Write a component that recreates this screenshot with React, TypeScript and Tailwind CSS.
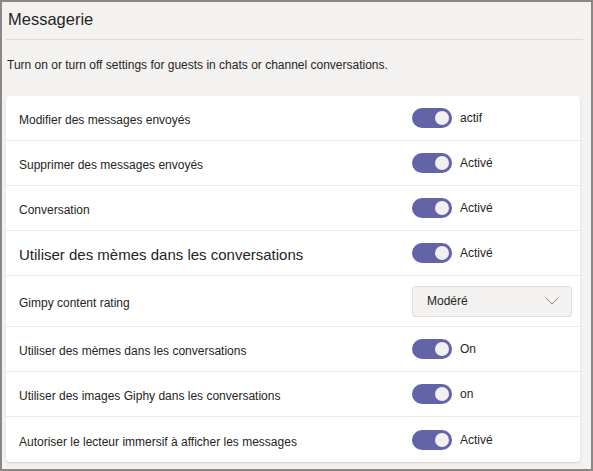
const rows: { label: string; value?: string; big?: boolean; select?: boolean }[] = [
  { label: "Modifier des messages envoyés", value: "actif" },
  { label: "Supprimer des messages envoyés", value: "Activé" },
  { label: "Conversation", value: "Activé" },
  { label: "Utiliser des mèmes dans les conversations", value: "Activé", big: true },
  { label: "Gimpy content rating", select: true },
  { label: "Utiliser des mèmes dans les conversations", value: "On" },
  { label: "Utiliser des images Giphy dans les conversations", value: "on" },
  { label: "Autoriser le lecteur immersif à afficher les messages", value: "Activé" },
];

function Toggle() {
  return (
    <div className="flex h-[20px] w-[40px] items-center justify-end rounded-full bg-[#6264a7] pr-[3px]">
      <div className="h-[14px] w-[14px] rounded-full bg-[#f0f0f0]" />
    </div>
  );
}

export default function App() {
  return (
    <div
      className="h-[471px] w-[593px] border-2 border-[#8a8886] bg-[#f3f2f1] text-[#252423]"
      style={{ fontFamily: '"Liberation Sans", Arial, sans-serif' }}
    >
      <div className="px-[4px]">
        <h1 className="pl-[2px] pt-[5px] text-[16.5px] leading-[24px]">Messagerie</h1>
        <div className="mt-[8px] h-px bg-[#dddbd9] mr-[4px]" />
        <p className="mt-[18px] pl-[1px] text-[12px] leading-[14px]">
          Turn on or turn off settings for guests in chats or channel conversations.
        </p>
        <div className="mt-[24px] mr-[7px] rounded-[4px] bg-white shadow-[0_1px_2px_rgba(0,0,0,0.14)]">
          {rows.map((r, i) => (
            <div
              key={i}
              className={`flex items-center border-b border-[#edebe9] last:border-b-0 ${
                r.select ? "h-[51px]" : "h-[45px]"
              }`}
            >
              <div
                className={`w-[406px] pl-[13px] pt-[4px] ${r.big ? "text-[15px]" : "text-[12px]"}`}
              >
                {r.label}
              </div>
              {r.select ? (
                <div className="flex h-[31px] w-[160px] items-center justify-between rounded-[3px] border border-[#e1dfdd] bg-[#f3f2f1] pl-[14px] pr-[12px] text-[12px]">
                  <span>Modéré</span>
                  <svg width="14" height="8" viewBox="0 0 14 8" fill="none">
                    <path d="M1 1l6 6 6-6" stroke="#8a8886" strokeWidth="1" />
                  </svg>
                </div>
              ) : (
                <div className="flex items-center gap-[8px]">
                  <Toggle />
                  <span className="text-[12px]">{r.value}</span>
                </div>
              )}
            </div>
          ))}
        </div>
      </div>
    </div>
  );
}
